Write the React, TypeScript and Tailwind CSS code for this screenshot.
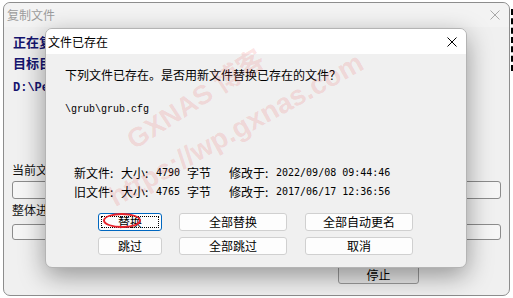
import React from 'react'

const cjk = { fontFamily: '"Noto Sans CJK SC", "Noto Sans", sans-serif' }
const mono = { fontFamily: '"Liberation Mono", "DejaVu Sans Mono", monospace' }
const num = { fontFamily: '"DejaVu Sans Mono", "Liberation Mono", monospace' }

function CloseIcon({ className }: { className?: string }) {
  return (
    <svg viewBox="0 0 10 10" className={className} fill="none" stroke="currentColor" strokeWidth="1">
      <path d="M0.5 0.5 L9.5 9.5 M9.5 0.5 L0.5 9.5" />
    </svg>
  )
}

type BtnProps = {
  label: string
  focused?: boolean
}

function DialogButton({ label, focused }: BtnProps) {
  return (
    <div
      className={
        'relative flex h-[18px] items-center justify-center rounded-[3px] border bg-[#fdfdfd] text-[12px] leading-none text-black ' +
        (focused ? 'border-[#0067c0]' : 'border-[#d0d0d0]')
      }
    >
      {focused && <span className="absolute inset-[2px] border border-dotted border-black" />}
      <span className="relative">{label}</span>
    </div>
  )
}

function InfoLine({ kind, size, date }: { kind: string; size: string; date: string }) {
  return (
    <div className="flex h-[19px] items-center whitespace-nowrap text-[12px] text-black">
      <span className="w-[47px] shrink-0">{kind}:</span>
      <span className="w-[35px] shrink-0">大小:</span>
      <span className="w-[31px] shrink-0 text-[10px]" style={num}>
        {size}
      </span>
      <span className="w-[42px] shrink-0">字节</span>
      <span className="w-[47px] shrink-0">修改于:</span>
      <span className="shrink-0 text-[10px]" style={num}>
        {date}
      </span>
    </div>
  )
}

function ProgressBox({ h }: { h: string }) {
  return <div className={'w-[489px] rounded-[3px] border border-[#8c8c8c] bg-[#f6f6f6] ' + h} />
}

export default function App() {
  return (
    <div className="relative h-[298px] w-[513px] overflow-hidden bg-white" style={cjk}>
      {/* stuff on the desktop behind */}
      <div className="absolute left-[511px] top-[9px] h-[62px] border-l-2 border-dashed border-black" />

      {/* background window: 复制文件 */}
      <div className="absolute left-[3px] top-[2px] flex h-[294px] w-[507px] flex-col rounded-[7px] border border-[#8d8d8d] bg-[#f0f0f0]">
        <div className="flex h-[24px] items-center justify-between rounded-t-[7px] bg-[#f3f3f3] pl-[3px] pr-[9px]">
          <span className="text-[12px] text-[#9c9c9c]">复制文件</span>
          <CloseIcon className="h-[10px] w-[10px] text-[#a8a8a8]" />
        </div>
        <div className="flex flex-col px-[8px] pt-[7px]">
          <div className="h-[16px] pl-[1px] text-[13px] font-bold leading-[16px] text-[#14146e]">正在复制文件…</div>
          <div className="mt-[5px] h-[16px] pl-[1px] text-[13px] font-bold leading-[16px] text-[#14146e]">目标目录：</div>
          <div className="mt-[9px] h-[16px] pl-[1px] text-[12px] font-bold leading-[16px] text-[#14146e]" style={mono}>
            D:\PeTools\boot
          </div>
          <div className="mt-[66px] h-[16px] text-[12px] leading-[16px] text-[#111]">当前文件进度：</div>
          <div className="mt-[3px]">
            <ProgressBox h="h-[18px]" />
          </div>
          <div className="mt-[3px] h-[16px] text-[12px] leading-[16px] text-[#111]">整体进度：</div>
          <div className="mt-[6px]">
            <ProgressBox h="h-[16px]" />
          </div>
          <div className="ml-[326px] mt-[25px] flex h-[19px] w-[81px] items-center justify-center rounded-[3px] border border-[#9a9a9a] bg-[#e8e8e8] text-[12px] text-black">
            停止
          </div>
        </div>
      </div>

      {/* front dialog: 文件已存在 */}
      <div className="absolute left-[45px] top-[28px] flex h-[240px] w-[422px] flex-col overflow-hidden rounded-[7px] border border-[#b4b4b4] bg-[#f0f0f0] shadow-[0_8px_26px_rgba(0,0,0,0.38)]">
        <div className="flex h-[25px] items-center justify-between bg-white pl-[2px] pr-[9px]">
          <span className="text-[12px] text-black">文件已存在</span>
          <CloseIcon className="h-[10px] w-[10px] text-black" />
        </div>
        <div className="flex flex-col pl-[19px] pt-[14px]">
          <div className="h-[14px] text-[12px] leading-[14px] text-black">下列文件已存在。是否用新文件替换已存在的文件？</div>
          <div className="mt-[21px] h-[14px] text-[10px] leading-[14px] text-black" style={mono}>
            \grub\grub.cfg
          </div>
          <div className="ml-[9px] mt-[46px] flex flex-col">
            <InfoLine kind="新文件" size="4790" date="2022/09/08 09:44:46" />
            <InfoLine kind="旧文件" size="4765" date="2017/06/17 12:36:56" />
          </div>
          <div className="ml-[33px] mt-[12px] grid grid-cols-[64px_108px_109px] gap-x-[17px] gap-y-[6px]">
            <DialogButton label="替换" focused />
            <DialogButton label="全部替换" />
            <div className="ml-[1px]">
              <DialogButton label="全部自动更名" />
            </div>
            <DialogButton label="跳过" />
            <DialogButton label="全部跳过" />
            <div className="ml-[1px]">
              <DialogButton label="取消" />
            </div>
          </div>
        </div>
      </div>

      {/* red annotation around 替换 */}
      <div className="absolute left-[103px] top-[213px] h-[15px] w-[38px] rounded-[50%] border-2 border-[#e8232b]" />

      {/* watermark */}
      <div
        className="pointer-events-none absolute left-[196px] top-[100px] -translate-x-1/2 -translate-y-1/2 -rotate-[33deg] whitespace-nowrap text-[27px] font-bold leading-none text-[rgba(232,50,50,0.15)]"
        style={{ fontFamily: '"Liberation Sans", "Noto Sans CJK SC", sans-serif' }}
      >
        GXNAS 博客
      </div>
      <div
        className="pointer-events-none absolute left-[236px] top-[130px] -translate-x-1/2 -translate-y-1/2 -rotate-[29deg] whitespace-nowrap text-[28px] font-bold leading-none text-[rgba(232,50,50,0.15)]"
        style={{ fontFamily: '"Liberation Sans", sans-serif' }}
      >
        https://wp.gxnas.com
      </div>
    </div>
  )
}
